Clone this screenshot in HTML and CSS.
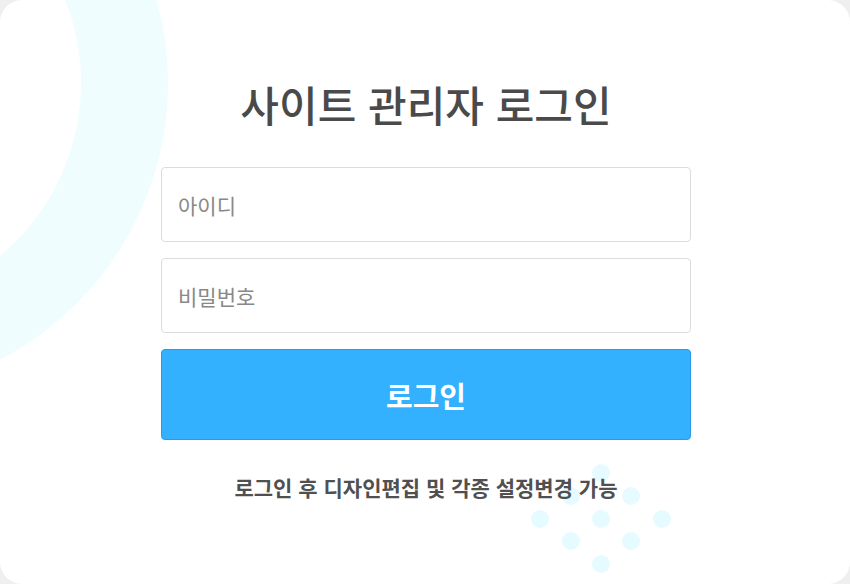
FILE: index.html
```html
<!DOCTYPE html>
<html lang="ko">
<head>
    <meta charset="UTF-8">
    <meta name="viewport" content="width=device-width, initial-scale=1.0">
    <title>사이트 관리자 로그인</title>
    <link rel="stylesheet" href="styles.css">
</head>
<body>
    <div class="login-box">
        <div class="ring"></div>
        <div class="dots">
            <span class="dot"></span>
            <span class="dot"></span>
            <span class="dot"></span>
            <span class="dot"></span>
            <span class="dot"></span>
            <span class="dot"></span>
            <span class="dot"></span>
            <span class="dot"></span>
            <span class="dot"></span>
        </div>

        <div class="login-container">
            <h2>사이트 관리자 로그인</h2>
            <form id="loginForm">
                <input type="text" id="username" name="username" placeholder="아이디">
                <input type="password" id="password" name="password" placeholder="비밀번호">
                <button type="submit">로그인</button>
            </form>
            <p class="notice">로그인 후 디자인편집 및 각종 설정변경 가능</p>
        </div>
    </div>
</body>
</html>
```

FILE: styles.css
```css
body {
    font-family: "Noto Sans CJK KR", "Noto Sans", sans-serif;
    margin: 0;
    padding: 0;
    background-color: #efefef;
}
.login-box {
    position: relative;
    width: 850px;
    height: 584px;
    background-color: #fff;
    border-radius: 22px;
    overflow: hidden;
}
.ring {
    position: absolute;
    left: -456px;
    top: -229px;
    width: 450px;
    height: 450px;
    border: 87px solid #effdff;
    border-radius: 50%;
}
.dots {
    position: absolute;
    left: 531px;
    top: 464px;
    width: 140px;
    height: 110px;
}
.dot {
    position: absolute;
    width: 18px;
    height: 18px;
    border-radius: 50%;
    background-color: #e6fbff;
}
.dot:nth-child(1) { left: 61px; top: 0; }
.dot:nth-child(2) { left: 31px; top: 23px; }
.dot:nth-child(3) { left: 91px; top: 23px; }
.dot:nth-child(4) { left: 0; top: 46px; }
.dot:nth-child(5) { left: 61px; top: 46px; }
.dot:nth-child(6) { left: 122px; top: 46px; }
.dot:nth-child(7) { left: 31px; top: 68px; }
.dot:nth-child(8) { left: 91px; top: 68px; }
.dot:nth-child(9) { left: 61px; top: 91px; }
.login-container {
    position: relative;
    width: 530px;
    margin: 0 auto;
    padding-top: 75px;
    padding-left: 2px;
    text-align: center;
}
.login-container h2 {
    margin: 0 0 34px;
    font-size: 42px;
    line-height: 58px;
    font-weight: 500;
    color: #4a4a4a;
}
#loginForm {
    display: flex;
    flex-direction: column;
    gap: 16px;
}
#loginForm input {
    box-sizing: border-box;
    height: 75px;
    padding: 0 16px;
    border: 1px solid #dcdcdc;
    border-radius: 4px;
    font-family: inherit;
    font-size: 21px;
    color: #555;
    outline: none;
}
#loginForm input::placeholder {
    color: #888;
}
#loginForm button {
    height: 91px;
    border: 1px solid #2a9ae6;
    border-radius: 4px;
    background-color: #33b1ff;
    color: #fff;
    font-family: inherit;
    font-size: 29px;
    font-weight: 700;
    cursor: pointer;
}
.notice {
    margin: 32px 0 0;
    font-size: 21px;
    font-weight: 700;
    color: #505050;
}
```
